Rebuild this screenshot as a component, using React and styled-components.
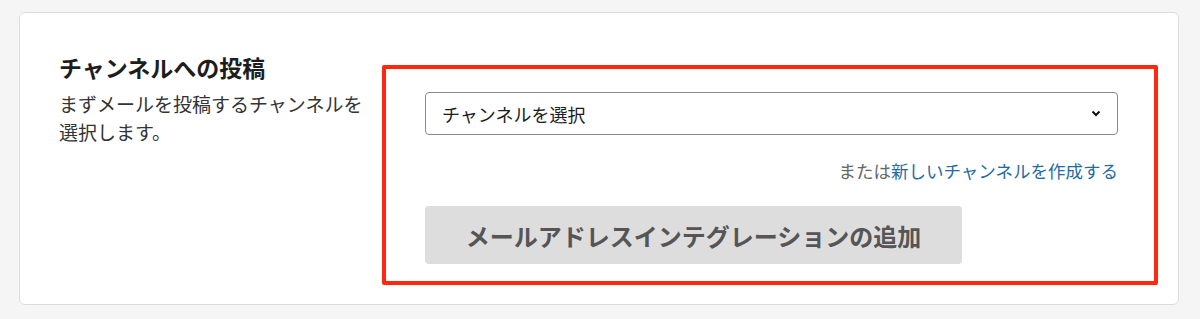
import React from "react";
import styled, { createGlobalStyle } from "styled-components";

const GlobalStyle = createGlobalStyle`
  body {
    margin: 0;
    background: #f5f5f5;
    font-family: "Noto Sans CJK JP", "Noto Sans", sans-serif;
    color: #1d1d1d;
  }
`;

const Page = styled.div`
  padding: 12px 21px 14px 19px;
`;

const Card = styled.section`
  display: flex;
  align-items: flex-start;
  gap: 12px;
  background: #fff;
  border: 1px solid #dcdcdc;
  border-radius: 6px;
  padding: 38px 20px 19px 39px;
`;

const Intro = styled.div`
  width: 311px;
  flex-shrink: 0;
`;

const Title = styled.h2`
  margin: 0;
  font-size: 23px;
  line-height: 32px;
  font-weight: 700;
  color: #1d1d1d;
`;

const Desc = styled.p`
  margin: 7px 0 0;
  font-size: 19px;
  line-height: 28px;
  color: #333;
`;

const Highlight = styled.div`
  flex: 1;
  margin-top: 14px;
  border: 4px solid #ff2a0d;
  border-radius: 2px;
  padding: 23px 36px 17px 39px;
`;

const Select = styled.div`
  display: flex;
  align-items: center;
  justify-content: space-between;
  height: 41px;
  border: 1px solid #8a8a8a;
  border-radius: 4px;
  padding: 0 16px 0 16px;
  font-size: 18px;
  color: #1d1d1d;
`;

const HintRow = styled.p`
  margin: 24px 0 0;
  text-align: right;
  font-size: 17.5px;
  line-height: 24px;
  color: #666;
`;

const Link = styled.a`
  color: #1f6ba3;
  text-decoration: none;
`;

const AddButton = styled.button`
  display: block;
  margin-top: 23px;
  width: 537px;
  height: 58px;
  border: none;
  border-radius: 4px;
  background: #dddddd;
  font-family: inherit;
  font-size: 24px;
  font-weight: 700;
  color: #555;
`;

const Chevron = () => (
  <svg width="10" height="7" viewBox="0 0 10 7">
    <path d="M1.5 1.5 L5 5 L8.5 1.5" fill="none" stroke="#111" strokeWidth="2" />
  </svg>
);

export default function App() {
  return (
    <>
      <GlobalStyle />
      <Page>
        <Card>
          <Intro>
            <Title>チャンネルへの投稿</Title>
            <Desc>まずメールを投稿するチャンネルを選択します。</Desc>
          </Intro>
          <Highlight>
            <Select>
              <span>チャンネルを選択</span>
              <Chevron />
            </Select>
            <HintRow>
              または<Link href="#">新しいチャンネルを作成する</Link>
            </HintRow>
            <AddButton>メールアドレスインテグレーションの追加</AddButton>
          </Highlight>
        </Card>
      </Page>
    </>
  );
}
